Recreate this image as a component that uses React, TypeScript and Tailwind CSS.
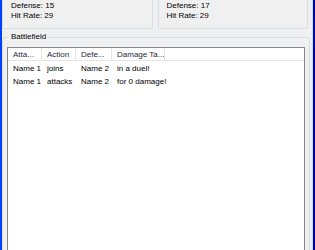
import React from 'react';

interface Stats {
  attack: number;
  defense: number;
  hitRate: number;
}

interface LogRow {
  attacker: string;
  action: string;
  defender: string;
  tail: string;
}

const p1: Stats = { attack: 18, defense: 15, hitRate: 29 };
const p2: Stats = { attack: 16, defense: 17, hitRate: 29 };

const log: LogRow[] = [
  { attacker: 'Name 1', action: 'joins', defender: 'Name 2', tail: 'in a duel!' },
  { attacker: 'Name 1', action: 'attacks', defender: 'Name 2', tail: 'for 0 damage!' },
];

const columns = [
  { label: 'Atta...', w: 'w-[34px]' },
  { label: 'Action', w: 'w-[34px]' },
  { label: 'Defe...', w: 'w-[36px]' },
  { label: 'Damage Ta...', w: 'w-[53px]' },
];

const StatBox: React.FC<{ stats: Stats }> = ({ stats }) => (
  <div className="flex-1 h-[36px] border border-[#d5dfe5] rounded-[2px] pl-[8px] flex flex-col justify-end pb-[7px] leading-[10px]">
    <div>Attack: {stats.attack}</div>
    <div>Defense: {stats.defense}</div>
    <div>Hit Rate: {stats.hitRate}</div>
  </div>
);

export default function App() {
  return (
    <div
      className="w-[315px] h-[250px] overflow-hidden flex bg-[#f0f0f0] text-[8px] text-black"
      style={{ fontFamily: '"Liberation Sans", Arial, sans-serif' }}
    >
      {/* window frame left */}
      <div className="w-[2px] shrink-0 bg-[#0040ff]" />

      <div className="flex-1 flex flex-col">
        {/* player stats */}
        <div className="flex gap-[5px] mt-[-7px] pr-[3px]">
          <StatBox stats={p1} />
          <StatBox stats={p2} />
        </div>
        <div className="h-[1px] mt-[1px] bg-[#dfe4e8]" />

        {/* battlefield group */}
        <div className="relative mt-[7px] mr-[1px] h-[240px] shrink-0 border border-[#d5dfe5] rounded-[2px] px-[4px] pt-[9px]">
          <span className="absolute left-[6px] top-[-6px] px-[2px] bg-[#f0f0f0] leading-[10px]">
            Battlefield
          </span>

          <div className="h-full bg-white border border-[#828790]">
            {/* header */}
            <div className="flex h-[13px] border-b border-[#e5e5e5] bg-white">
              {columns.map((c) => (
                <div
                  key={c.label}
                  className={`${c.w} shrink-0 border-r border-[#e5e5e5] pl-[5px] leading-[13px] text-[#1e2a3b] whitespace-nowrap overflow-hidden`}
                >
                  {c.label}
                </div>
              ))}
            </div>

            {/* rows */}
            <div className="pt-[1px]">
              {log.map((r, i) => (
                <div key={i} className="flex h-[13px] leading-[13px] whitespace-nowrap">
                  <div className="w-[34px] shrink-0 pl-[5px]">{r.attacker}</div>
                  <div className="w-[34px] shrink-0 pl-[5px]">{r.action}</div>
                  <div className="w-[36px] shrink-0 pl-[5px]">{r.defender}</div>
                  <div className="pl-[5px]">{r.tail}</div>
                </div>
              ))}
            </div>
          </div>
        </div>
      </div>

      {/* window frame right */}
      <div className="w-[1px] shrink-0 bg-[#f0f0f0]" />
      <div className="w-[1px] shrink-0 bg-[#bfe9f2]" />
      <div className="w-[2px] shrink-0 bg-[#0000b0]" />
    </div>
  );
}
